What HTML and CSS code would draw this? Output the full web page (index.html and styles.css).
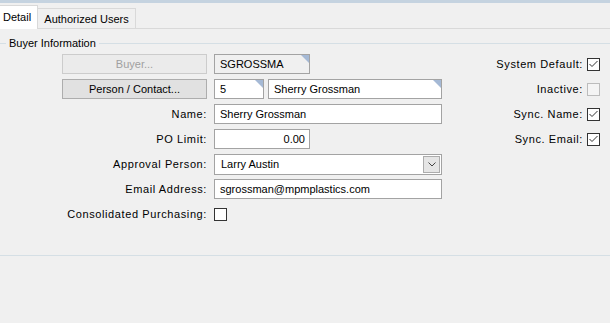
FILE: index.html
```html
<!DOCTYPE html>
<html>
<head>
    <title>Buyer Detail</title>
    <link rel="stylesheet" href="styles.css">
</head>
<body>
    <div class="topbar"></div>
    <div class="tabs">
        <div class="tab active">Detail</div>
        <div class="tab">Authorized Users</div>
    </div>
    <div class="page">
        <fieldset class="group">
            <legend>Buyer Information</legend>
            <div class="cols">
                <div class="form">
                    <button class="btn" disabled>Buyer...</button>
                    <div class="field"><span class="box ro lookup w96">SGROSSMA</span></div>

                    <button class="btn">Person / Contact...</button>
                    <div class="field">
                        <span class="box lookup w50">5</span>
                        <span class="box lookup grow">Sherry Grossman</span>
                    </div>

                    <label class="lbl">Name:</label>
                    <div class="field"><span class="box grow">Sherry Grossman</span></div>

                    <label class="lbl">PO Limit:</label>
                    <div class="field"><span class="box w96 num">0.00</span></div>

                    <label class="lbl">Approval Person:</label>
                    <div class="field">
                        <div class="select">
                            <span class="value">Larry Austin</span>
                            <span class="drop">
                                <svg width="8" height="5" viewBox="0 0 8 5"><path d="M0.5 0.5 L4 4 L7.5 0.5" fill="none" stroke="#444" stroke-width="1"/></svg>
                            </span>
                        </div>
                    </div>

                    <label class="lbl">Email Address:</label>
                    <div class="field"><span class="box grow">sgrossman@mpmplastics.com</span></div>

                    <label class="lbl">Consolidated Purchasing:</label>
                    <div class="field"><span class="chk"></span></div>
                </div>

                <div class="flags">
                    <label class="lbl">System Default:</label>
                    <span class="chk"><svg width="11" height="11" viewBox="0 0 11 11"><polyline points="1.5,5 4,7.5 9.5,2" fill="none" stroke="#333" stroke-width="1"/></svg></span>

                    <label class="lbl">Inactive:</label>
                    <span class="chk off"></span>

                    <label class="lbl">Sync. Name:</label>
                    <span class="chk"><svg width="11" height="11" viewBox="0 0 11 11"><polyline points="1.5,5 4,7.5 9.5,2" fill="none" stroke="#333" stroke-width="1"/></svg></span>

                    <label class="lbl">Sync. Email:</label>
                    <span class="chk"><svg width="11" height="11" viewBox="0 0 11 11"><polyline points="1.5,5 4,7.5 9.5,2" fill="none" stroke="#333" stroke-width="1"/></svg></span>
                </div>
            </div>
        </fieldset>
    </div>
</body>
</html>
```

FILE: styles.css
```css
* {
    box-sizing: border-box;
}
body {
    margin: 0;
    width: 610px;
    height: 323px;
    overflow: hidden;
    background: #f0f0f0;
    font-family: "Liberation Sans", Arial, sans-serif;
    font-size: 11px;
    color: #000;
}
.topbar {
    height: 3px;
    background: #c5d3e0;
}
.tabs {
    display: flex;
    align-items: flex-end;
    height: 26px;
    border-bottom: 1px solid #d9d9d9;
}
.tab {
    height: 20px;
    width: 98px;
    border: 1px solid #d9d9d9;
    border-left: none;
    border-bottom: none;
    line-height: 20px;
    text-align: center;
}
.tab.active {
    width: 38px;
    height: 24px;
    margin-bottom: -1px;
    padding-left: 3px;
    text-align: left;
    line-height: 22px;
    background: #fff;
}
.page {
    padding-top: 8px;
}
.group {
    margin: 0 -3px 0 -1px;
    padding: 4px 12px 0 0;
    height: 219px;
    border: 1px solid #d5dfe5;
}
.group legend {
    margin-left: 6px;
    padding: 0 3px;
    line-height: 13px;
}
.cols {
    display: flex;
}
.form {
    display: grid;
    grid-template-columns: 187px 228px;
    grid-auto-rows: 20px;
    column-gap: 7px;
    row-gap: 5px;
    padding-left: 20px;
}
.flags {
    margin-left: auto;
    display: grid;
    grid-template-columns: auto 13px;
    grid-auto-rows: 20px;
    column-gap: 4px;
    row-gap: 5px;
    align-items: center;
}
.lbl {
    text-align: right;
    align-self: center;
    white-space: nowrap;
    letter-spacing: 0.6px;
}
.btn {
    justify-self: end;
    width: 145px;
    height: 20px;
    padding: 0;
    font: inherit;
    color: #000;
    background: #e1e1e1;
    border: 1px solid #adadad;
}
.btn:disabled {
    color: #a0a0a0;
    background: #ebebeb;
    border-color: #cccccc;
}
.field {
    display: flex;
    align-items: center;
    gap: 4px;
}
.box {
    position: relative;
    height: 20px;
    padding: 0 5px;
    line-height: 18px;
    background: #fff;
    border: 1px solid #a3a3a3;
    white-space: nowrap;
}
.box.ro {
    background: #f0f0f0;
}
.box.grow {
    flex: 1;
}
.w96 {
    width: 96px;
}
.w50 {
    width: 50px;
}
.num {
    text-align: right;
    padding-right: 4px;
}
.lookup::after {
    content: "";
    position: absolute;
    top: 0;
    right: 0;
    border-style: solid;
    border-width: 0 8px 8px 0;
    border-color: transparent #a5b9d5 transparent transparent;
}
.select {
    flex: 1;
    display: flex;
    height: 21px;
    background: #fff;
    border: 1px solid #a3a3a3;
}
.select .value {
    flex: 1;
    padding-left: 6px;
    line-height: 19px;
}
.drop {
    width: 17px;
    margin: 1px;
    display: flex;
    align-items: center;
    justify-content: center;
    background: #e5e5e5;
    border: 1px solid #acacac;
}
.chk {
    display: flex;
    align-items: center;
    justify-content: center;
    width: 13px;
    height: 13px;
    background: #fff;
    border: 1px solid #333;
}
.chk.off {
    background: #f4f4f4;
    border-color: #bcbcbc;
}
```
